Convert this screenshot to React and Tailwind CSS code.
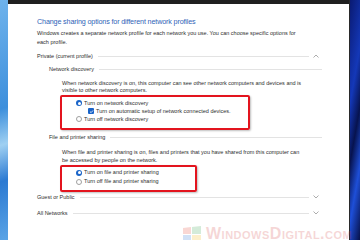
import React from 'react';

const font = { fontFamily: '"Liberation Sans", Arial, sans-serif' };

const Radio = ({ on }) =>
  on ? (
    <span className="w-[6px] h-[6px] rounded-full bg-[#1a64c8] flex items-center justify-center shrink-0">
      <span className="w-[3px] h-[3px] rounded-full bg-white" />
    </span>
  ) : (
    <span className="w-[6px] h-[6px] rounded-full border border-[#a0a0a0] bg-white shrink-0" />
  );

const Check = () => (
  <span className="w-[6px] h-[6px] rounded-[1px] bg-[#1a64c8] flex items-center justify-center shrink-0">
    <svg width="5" height="5" viewBox="0 0 10 10">
      <path d="M2 5.2 L4.2 7.3 L8.2 2.8" stroke="white" strokeWidth="1.6" fill="none" />
    </svg>
  </span>
);

const Chevron = ({ up }) => (
  <svg width="6" height="4" viewBox="0 0 12 8" className="shrink-0">
    <path d={up ? 'M1 7 L6 2 L11 7' : 'M1 1 L6 6 L11 1'} stroke="#8a8a8a" strokeWidth="1.4" fill="none" />
  </svg>
);

const Heading = ({ label, chevron, className }) => (
  <div className={`flex items-center h-[10px] ${className}`}>
    <span className="whitespace-nowrap">{label}</span>
    <span className="flex-1 h-px bg-[#e3e3e3] ml-[5px]" />
    {chevron && (
      <span className="w-[13px] flex justify-center">
        <Chevron up={chevron === 'up'} />
      </span>
    )}
  </div>
);

export default function App() {
  return (
    <div className="w-[360px] h-[240px] flex overflow-hidden relative bg-white" style={font}>
      <div className="w-[8px] h-full bg-[linear-gradient(160deg,#6fb3ec_0%,#3d8fdc_45%,#9fd0f2_60%,#2c7ad2_75%,#5aa4e6_100%)]" />
      <div className="flex-1 flex flex-col border-r border-[#2a2a2a]">
        <div className="h-[4px] bg-[#1f1f1f]" />
        <div className="flex-1 pl-[29px] pr-[27px] text-[#2e2e2e] text-[5.5px] whitespace-nowrap">
          <div className="mt-[13px] h-[10px] flex items-center text-[#2f63b7] text-[7.2px] tracking-[-0.15px]">
            Change sharing options for different network profiles
          </div>
          <p className="mt-[2px] leading-[8.5px]">
            Windows creates a separate network profile for each network you use. You can choose specific options for
            <br />
            each profile.
          </p>
          <Heading className="mt-[5px]" label="Private (current profile)" chevron="up" />
          <div className="pl-[12px]">
            <Heading className="mt-[3px]" label="Network discovery" />
            <div className="pl-[13px]">
              <p className="mt-[6px] leading-[7px]">
                When network discovery is on, this computer can see other network computers and devices and is
                <br />
                visible to other network computers.
              </p>
              <div className="mt-[1px] -ml-[2px] w-[190px] h-[35px] border-2 border-[#e3141e] rounded-[2px] shadow-[1px_1px_2px_rgba(0,0,0,0.25)] pt-[2px] pl-[14px]">
                <div className="h-[8px] flex items-center gap-[1px]">
                  <Radio on />
                  <span className="ml-[1px]">Turn on network discovery</span>
                </div>
                <div className="h-[8px] flex items-center pl-[12px] gap-[1px]">
                  <Check />
                  <span className="ml-[1px]">Turn on automatic setup of network connected devices.</span>
                </div>
                <div className="h-[8px] flex items-center gap-[1px]">
                  <Radio />
                  <span className="ml-[1px]">Turn off network discovery</span>
                </div>
              </div>
            </div>
            <Heading className="mt-[2px]" label="File and printer sharing" />
            <div className="pl-[13px]">
              <p className="mt-[6px] leading-[8px]">
                When file and printer sharing is on, files and printers that you have shared from this computer can
                <br />
                be accessed by people on the network.
              </p>
              <div className="mt-[1px] -ml-[2px] w-[137px] h-[27px] border-2 border-[#e3141e] rounded-[2px] shadow-[1px_1px_2px_rgba(0,0,0,0.25)] pt-[1px] pl-[14px]">
                <div className="h-[9px] flex items-center gap-[1px]">
                  <Radio on />
                  <span className="ml-[1px]">Turn on file and printer sharing</span>
                </div>
                <div className="h-[9px] flex items-center gap-[1px]">
                  <Radio />
                  <span className="ml-[1px]">Turn off file and printer sharing</span>
                </div>
              </div>
            </div>
          </div>
          <Heading className="mt-0" label="Guest or Public" chevron="down" />
          <Heading className="mt-[6px]" label="All Networks" chevron="down" />
        </div>
      </div>
      <div className="w-[10px] h-full bg-[linear-gradient(100deg,#0a1a72_0%,#1438b8_35%,#07134f_55%,#1e4fd8_75%,#061048_100%)]" />
      <div className="absolute left-[183px] top-[226px] flex items-start gap-[5px] opacity-[0.2] pointer-events-none">
        <svg width="18" height="16" viewBox="0 0 18 16">
          <path d="M0 2 L8 1 L8 8 L0 8 Z" fill="#e23b2b" />
          <path d="M9 1 L18 0 L18 8 L9 8 Z" fill="#2f9e44" />
          <path d="M0 9 L8 9 L8 15 L0 14 Z" fill="#1f6fd6" />
          <path d="M9 9 L18 9 L18 16 L9 15 Z" fill="#f2b500" />
        </svg>
        <span className="text-[16px] font-bold text-[#d23a3a] leading-none tracking-[0.5px]" style={{ fontVariant: 'small-caps', fontFamily: '"Liberation Sans", sans-serif' }}>
          WindowsDigital.com
        </span>
      </div>
    </div>
  );
}
